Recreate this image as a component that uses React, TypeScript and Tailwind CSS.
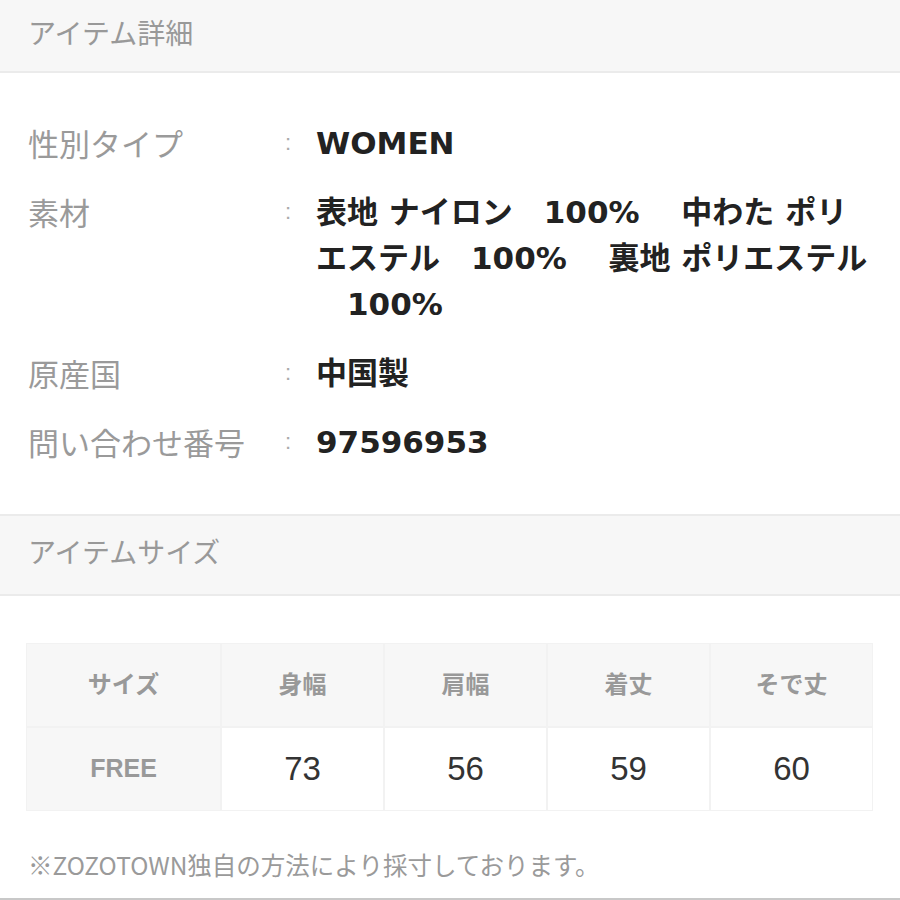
import type { ReactNode } from "react";

const font = "font-['Liberation_Sans','Noto_Sans_CJK_JP',sans-serif]";
const jp = "font-['Noto_Sans_CJK_JP',sans-serif]";

const details: { label: string; value: ReactNode }[] = [
  { label: "性別タイプ", value: "WOMEN" },
  {
    label: "素材",
    value: (
      <>
        <span className="block">表地 ナイロン&#x3000;100%&#x3000; 中わた ポリ</span>
        <span className="block">エステル&#x3000;100%&#x3000; 裏地 ポリエステル</span>
        <span className="block whitespace-pre">{"\u3000100%"}</span>
      </>
    ),
  },
  { label: "原産国", value: "中国製" },
  { label: "問い合わせ番号", value: "97596953" },
];

const sizeHeads = ["サイズ", "身幅", "肩幅", "着丈", "そで丈"];
const sizeRow = ["73", "56", "59", "60"];

export default function App() {
  return (
    <main className={`w-[900px] h-[900px] overflow-hidden bg-white ${font}`}>
      {/* ITEM DETAIL */}
      <div className="h-[73px] bg-[#f7f7f7] border-b-2 border-[#ebebeb] px-[28px] pt-[12px]">
        <h2 className={`text-[28px] leading-[40px] text-[#999] ${jp}`}>アイテム詳細</h2>
      </div>

      <section className="px-[28px] pt-[47px] pb-[49px] flex flex-col gap-[23px]">
        {details.map((row) => (
          <div key={row.label} className="flex">
            <div className={`w-[257px] shrink-0 text-[31px] leading-[46px] text-[#9a9a9a] ${jp}`}>
              {row.label}
            </div>
            <div className="w-[31px] shrink-0 text-[22px] leading-[46px] text-[#aaa]">:</div>
            <div className="w-[570px] text-[31px] leading-[46px] font-bold text-[#222] font-['DejaVu_Sans','Noto_Sans_CJK_JP',sans-serif]">
              {row.value}
            </div>
          </div>
        ))}
      </section>

      {/* ITEM SIZE */}
      <div className="h-[82px] bg-[#f7f7f7] border-y-2 border-[#ebebeb] px-[28px] pt-[15px]">
        <h2 className={`text-[28px] leading-[40px] text-[#999] ${jp}`}>アイテムサイズ</h2>
      </div>

      <section className="pt-[47px] px-[26px]">
        <div className="w-[847px] grid grid-cols-[193px_repeat(4,1fr)] gap-[2px] bg-[#f2f2f2] p-px">
          {sizeHeads.map((h) => (
            <div
              key={h}
              className="h-[82px] bg-[#f7f7f7] flex items-center justify-center text-[24px] font-bold text-[#999]"
            >
              {h}
            </div>
          ))}
          <div className="h-[82px] bg-[#f7f7f7] flex items-center justify-center text-[25px] font-bold text-[#999]">
            FREE
          </div>
          {sizeRow.map((v, i) => (
            <div
              key={i}
              className="h-[82px] bg-white flex items-center justify-center text-[33px] text-[#333]"
            >
              {v}
            </div>
          ))}
        </div>
      </section>

      <div className="border-b-2 border-[#c8c8c8] px-[28px] pt-[37px] pb-[16px]">
        <p className={`text-[24.5px] leading-[34px] text-[#9a9a9a] ${jp}`}>
          ※ZOZOTOWN独自の方法により採寸しております。
        </p>
      </div>
    </main>
  );
}
